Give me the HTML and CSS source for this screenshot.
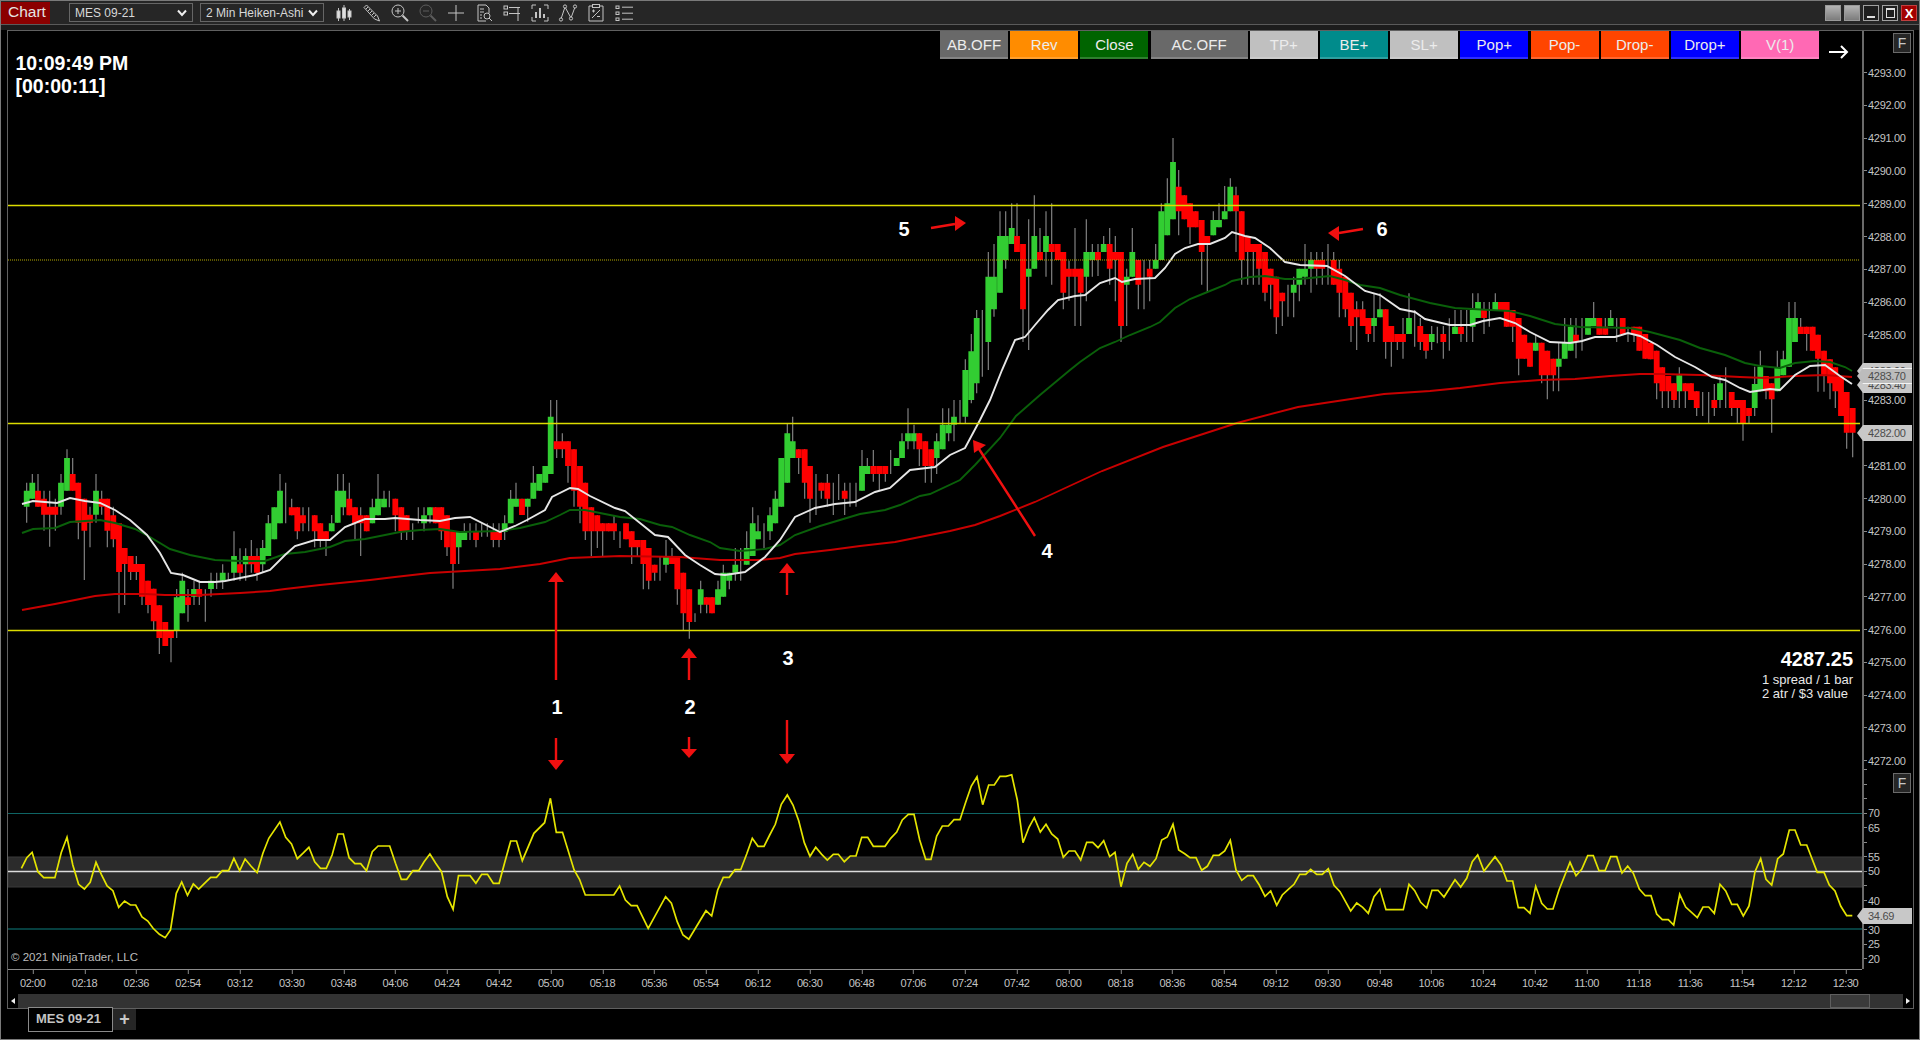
FILE: index.html
```html
<!DOCTYPE html>
<html lang="en">
<head>
    <meta charset="UTF-8">
    <title>Chart - MES 09-21</title>
    <link rel="stylesheet" href="styles.css">
</head>
<body>
<div class="window">
    <header class="titlebar">
        <div class="chart-tab">Chart</div>
        <div class="combo combo-first">MES 09-21<svg class="chevron" viewBox="0 0 10 8"><path d="M1 1.5 5 6 9 1.5"/></svg></div>
        <div class="combo">2 Min Heiken-Ashi<svg class="chevron" viewBox="0 0 10 8"><path d="M1 1.5 5 6 9 1.5"/></svg></div>
        <div class="tools">
            <!-- candles -->
            <svg class="tool" viewBox="0 0 20 20"><path d="M4.5 5v13M10 2v16M15.5 6v11"/><rect class="solid" x="3" y="8" width="3" height="7"/><rect class="solid" x="8.5" y="5" width="3" height="10"/><rect class="solid" x="14" y="8" width="3" height="6"/></svg>
            <!-- pencil -->
            <svg class="tool" viewBox="0 0 20 20"><path d="M2 4.5 4.5 2 15.5 13l2 5-5-2z"/><path d="M4 6 6 4M6 8l2-2M8 10l2-2M10 12l2-2M12 14l2-2"/></svg>
            <!-- zoom in -->
            <svg class="tool" viewBox="0 0 20 20"><circle cx="8" cy="8" r="6"/><path d="M8 5v6M5 8h6"/><path class="thick" d="m12.5 12.5 5.5 5.5"/></svg>
            <!-- zoom out -->
            <svg class="tool tool-off" viewBox="0 0 20 20"><circle cx="8" cy="8" r="6"/><path d="M5 8h6"/><path class="thick" d="m12.5 12.5 5.5 5.5"/></svg>
            <!-- crosshair -->
            <svg class="tool" viewBox="0 0 20 20"><path d="M10 2v16M2 10h16"/></svg>
            <!-- document search -->
            <svg class="tool" viewBox="0 0 20 20"><path d="M12 18H4V2h8l3 3v5"/><path d="M6 6h4M6 9h4M6 12h2M6 15h2"/><circle cx="13" cy="13" r="3"/><path d="m15 15 3 3"/></svg>
            <!-- properties -->
            <svg class="tool" viewBox="0 0 20 20"><rect x="2" y="3" width="3.5" height="3"/><rect x="2" y="9" width="3.5" height="3"/><path d="M7 4.5h11M7 10.5h11M16 4.5V18"/></svg>
            <!-- bars in brackets -->
            <svg class="tool" viewBox="0 0 20 20"><path d="M6 2H2v4M14 2h4v4M6 18H2v-4M14 18h4v-4"/><path class="thick" d="M6 15V9M10 15V5M14 15v-4"/></svg>
            <!-- drawing nodes -->
            <svg class="tool" viewBox="0 0 20 20"><path d="m3 16 4-12 6 11 4-11"/><circle class="solid-dark" cx="3" cy="16.5" r="1.6"/><circle class="solid-dark" cx="7" cy="3.5" r="1.6"/><circle class="solid-dark" cx="13" cy="15.5" r="1.6"/><circle class="solid-dark" cx="17" cy="3.5" r="1.6"/></svg>
            <!-- clipboard -->
            <svg class="tool" viewBox="0 0 20 20"><path d="M6 3H3v15h14V3h-3"/><rect x="6.5" y="1.5" width="7" height="3"/><path d="M6 15 14 7M6 8h3M7.5 6.5v3M11 13.5h3"/></svg>
            <!-- list -->
            <svg class="tool" viewBox="0 0 20 20"><rect x="2" y="3" width="3" height="2.5"/><rect x="2" y="9" width="3" height="2.5"/><rect x="2" y="15" width="3" height="2.5"/><path d="M8 4.2h11M8 10.2h11M8 16.2h11"/></svg>
        </div>
        <div class="window-buttons">
            <div class="win-btn win-grey"></div>
            <div class="win-btn win-grey"></div>
            <div class="win-btn win-dark"><span class="win-min"></span></div>
            <div class="win-btn win-dark"><span class="win-max"></span></div>
            <div class="win-btn win-close">X</div>
        </div>
    </header>
    <div class="strip"></div>

    <main class="frame">
        <div class="panels">
            <div class="plot">
                <svg class="canvas" width="1854" height="938" viewBox="8 31 1854 938">
                    <!-- rsi panel -->
                    <rect class="rsi-band" x="8" y="857" width="1854" height="30"/>
                    <path class="rsi-limit" d="M8 813.5h1854"/>
                    <path class="rsi-limit rsi-limit-low" d="M8 929h1854"/>
                    <path class="rsi-mid" d="M8 871.5h1854"/>
                    <polyline id="rsi-line" class="rsi-line" points=""/>

                    <!-- candles, filled from chart.js -->
                    <path id="wicks" class="wicks" d=""/>
                    <path id="bodies-green" class="body-green" d=""/>
                    <path id="bodies-red" class="body-red" d=""/>

                    <!-- moving averages -->
                    <polyline class="ema ema-slow" points="22,610 55,604 75,600 95,596 115,594 145,594 165,595 200,595 240,593 270,591 285,589 320,585 340,583 370,580 395,577 430,573 465,571 500,569 540,564 560,560 570,558 620,556 680,557 720,560 760,560 780,558 795,554 830,550 860,546 895,542 920,537 950,531 975,525 1000,516 1035,502 1102,471 1163,447 1237,423 1298,407 1384,394 1430,391 1460,388 1500,383 1540,380 1575,379 1610,376 1640,374 1660,374 1700,375 1740,377 1765,378 1795,376 1825,375 1852,377"/>
                    <polyline class="ema ema-mid" points="22,533 33,529 55,528 70,522 85,521 100,520 115,523 135,529 150,537 170,549 190,555 215,560 240,561 265,561 285,554 305,552 330,547 345,541 365,539 390,534 400,532 420,530 440,529 460,532 500,531 520,528 545,522 560,515 570,510 585,510 610,515 620,517 640,519 660,525 672,527 690,535 710,542 720,548 740,551 765,549 780,545 795,535 820,526 840,520 860,514 885,510 900,505 920,496 930,494 960,480 975,465 1000,438 1016,416 1040,395 1070,370 1080,362 1100,348 1115,342 1130,335 1150,327 1160,322 1175,308 1190,299 1205,293 1225,285 1232,281 1250,277 1265,276 1285,279 1300,279 1330,276 1345,280 1360,285 1380,288 1400,295 1430,303 1455,308 1490,310 1510,311 1530,316 1555,324 1580,327 1630,328 1650,332 1680,340 1700,348 1725,355 1745,363 1760,366 1780,368 1795,363 1815,361 1830,362 1845,367 1852,371"/>
                    <polyline class="ema ema-fast" points="22,504 33,501 45,502 57,503 70,498 85,501 100,503 115,510 130,520 147,535 160,553 171,573 183,575 200,582 215,582 225,581 240,578 255,575 270,570 285,555 295,546 315,540 330,540 345,527 365,519 385,519 395,518 420,520 440,521 455,518 470,517 500,532 515,526 527,520 545,510 552,497 570,488 578,489 590,496 615,508 625,511 640,523 655,535 668,537 685,555 700,565 715,574 725,575 745,572 765,557 780,540 795,517 815,508 835,504 855,502 875,492 890,488 910,470 935,467 950,455 965,448 980,420 990,400 1002,370 1015,340 1025,337 1035,325 1048,310 1058,300 1075,296 1085,295 1100,283 1115,278 1122,282 1135,279 1155,278 1165,268 1175,254 1185,248 1198,244 1210,244 1225,238 1232,232 1245,236 1255,238 1270,248 1285,262 1300,265 1327,266 1345,276 1365,291 1380,295 1400,309 1415,312 1425,319 1450,325 1470,325 1483,321 1500,318 1515,323 1530,332 1550,342 1570,343 1582,341 1595,337 1615,337 1628,333 1640,336 1657,345 1675,357 1695,367 1712,377 1725,380 1740,388 1750,392 1770,389 1780,390 1795,375 1810,366 1825,365 1840,376 1852,384"/>

                    <!-- horizontal levels -->
                    <path class="level" d="M8 205.6h1852M8 423.6h1852M8 630.6h1852"/>
                    <path class="level level-dotted" d="M8 260h1852"/>

                    <!-- annotation arrows -->
                    <path class="arrow-line" d="M556 582v98M689 658v22M787 573v22M979 449l56 87M955 224l-24 4M1339 233l24-4M556 738v22M689 737v12M787 720v34"/>
                    <g class="arrow-head">
                        <polygon points="556,572 548,582 564,582"/>
                        <polygon points="689,648 681,658 697,658"/>
                        <polygon points="787,563 779,573 795,573"/>
                        <polygon points="973,440 986,445 974,453"/>
                        <polygon points="966,223 955,216 955,231"/>
                        <polygon points="1328,233 1339,226 1339,241"/>
                        <polygon points="556,770 548,760 564,760"/>
                        <polygon points="689,758 681,749 697,749"/>
                        <polygon points="787,764 779,754 795,754"/>
                    </g>
                    <g class="arrow-label">
                        <text x="557" y="714">1</text>
                        <text x="690" y="714">2</text>
                        <text x="788" y="665">3</text>
                        <text x="1047" y="558">4</text>
                        <text x="904" y="236">5</text>
                        <text x="1382" y="236">6</text>
                    </g>
                </svg>

                <div class="clock">10:09:49 PM<br>[00:00:11]</div>

                <div class="order-bar">
                    <div class="order-btn btn-grey">AB.OFF</div>
                    <div class="order-btn btn-orange">Rev</div>
                    <div class="order-btn btn-green">Close</div>
                    <div class="order-btn btn-grey btn-wide">AC.OFF</div>
                    <div class="order-btn btn-silver">TP+</div>
                    <div class="order-btn btn-teal">BE+</div>
                    <div class="order-btn btn-silver">SL+</div>
                    <div class="order-btn btn-blue">Pop+</div>
                    <div class="order-btn btn-red">Pop-</div>
                    <div class="order-btn btn-red">Drop-</div>
                    <div class="order-btn btn-blue">Drop+</div>
                    <div class="order-btn btn-pink btn-last">V(1)</div>
                    <svg class="next-arrow" viewBox="0 0 20 14"><path d="M0 7h18M12 1l6 6-6 6"/></svg>
                </div>

                <div class="quote">
                    <div class="quote-price">4287.25</div>
                    <div>1 spread / 1 bar</div>
                    <div class="quote-atr">2 atr / $3 value</div>
                </div>

                <div class="copyright">© 2021 NinjaTrader, LLC</div>
            </div>

            <aside class="axis">
                <div class="price-scale">
                    <div class="tick">4293.00</div>
                    <div class="tick">4292.00</div>
                    <div class="tick">4291.00</div>
                    <div class="tick">4290.00</div>
                    <div class="tick">4289.00</div>
                    <div class="tick">4288.00</div>
                    <div class="tick">4287.00</div>
                    <div class="tick">4286.00</div>
                    <div class="tick">4285.00</div>
                    <div class="tick">4284.00</div>
                    <div class="tick">4283.00</div>
                    <div class="tick">4282.00</div>
                    <div class="tick">4281.00</div>
                    <div class="tick">4280.00</div>
                    <div class="tick">4279.00</div>
                    <div class="tick">4278.00</div>
                    <div class="tick">4277.00</div>
                    <div class="tick">4276.00</div>
                    <div class="tick">4275.00</div>
                    <div class="tick">4274.00</div>
                    <div class="tick">4273.00</div>
                    <div class="tick">4272.00</div>
                </div>
                <div class="rsi-scale">
                    <div class="tick"></div>
                    <div class="tick"></div>
                    <div class="tick"></div>
                    <div class="tick">70</div>
                    <div class="tick">65</div>
                    <div class="tick"></div>
                    <div class="tick">55</div>
                    <div class="tick">50</div>
                    <div class="tick"></div>
                    <div class="tick">40</div>
                    <div class="tick"></div>
                    <div class="tick">30</div>
                    <div class="tick">25</div>
                    <div class="tick">20</div>
                </div>
                <div class="f-btn f-btn-top">F</div>
                <div class="f-btn f-btn-rsi">F</div>
                <div class="pill pill-a">4283.90</div>
                <div class="pill pill-c">4283.40</div>
                <div class="pill pill-b">4283.70</div>
                <div class="pill pill-last">4282.00</div>
                <div class="pill pill-rsi">34.69</div>
            </aside>
        </div>

        <div class="time-row">
            <div class="time-axis">
                <span>02:00</span><span>02:18</span><span>02:36</span><span>02:54</span><span>03:12</span><span>03:30</span>
                <span>03:48</span><span>04:06</span><span>04:24</span><span>04:42</span><span>05:00</span><span>05:18</span>
                <span>05:36</span><span>05:54</span><span>06:12</span><span>06:30</span><span>06:48</span><span>07:06</span>
                <span>07:24</span><span>07:42</span><span>08:00</span><span>08:18</span><span>08:36</span><span>08:54</span>
                <span>09:12</span><span>09:30</span><span>09:48</span><span>10:06</span><span>10:24</span><span>10:42</span>
                <span>11:00</span><span>11:18</span><span>11:36</span><span>11:54</span><span>12:12</span><span>12:30</span>
            </div>
        </div>

        <div class="scrollbar">
            <div class="scroll-arrow"><span class="tri-left"></span></div>
            <div class="scroll-thumb"></div>
            <div class="scroll-arrow"><span class="tri-right"></span></div>
        </div>
    </main>

    <footer class="tabs">
        <div class="tab">MES 09-21</div>
        <div class="tab-add">+</div>
    </footer>
</div>
<script src="chart.js"></script>
</body>
</html>
```

FILE: styles.css
```css
* {
    box-sizing: border-box;
}

body {
    margin: 0;
    background-color: #000;
    font-family: "Liberation Sans", Arial, sans-serif;
    overflow: hidden;
}

.window {
    display: flex;
    flex-direction: column;
    width: 1920px;
    height: 1040px;
    border: 1px solid #7a7a7a;
    background-color: #000;
}

/* Title bar */
.titlebar {
    display: flex;
    align-items: flex-start;
    height: 24px;
    flex: none;
    background-color: #262626;
    border-bottom: 1px solid #5a5a5a;
}

.chart-tab {
    width: 49px;
    height: 22px;
    margin-top: 1px;
    background-color: #8b0000;
    color: #e4e4e4;
    font-size: 15.5px;
    line-height: 20px;
    padding-left: 7px;
}

.combo {
    display: flex;
    align-items: center;
    justify-content: space-between;
    width: 124px;
    height: 19px;
    margin: 2px 0 0 7px;
    padding: 0 5px 0 5px;
    border: 1px solid #666;
    color: #d8d8d8;
    font-size: 12px;
}

.combo-first {
    margin-left: 19px;
}

.chevron {
    width: 10px;
    height: 8px;
    fill: none;
    stroke: #eee;
    stroke-width: 2;
}

.tools {
    display: flex;
    gap: 8px;
    margin: 2px 0 0 10px;
}

.tool {
    width: 20px;
    height: 20px;
    fill: none;
    stroke: #c4c4c4;
    stroke-width: 1;
}

.tool .solid {
    fill: #e0e0e0;
}

.tool .solid-dark {
    fill: #262626;
}

.tool .thick {
    stroke-width: 2;
}

.tool-off {
    stroke: #5c5c5c;
}

.window-buttons {
    display: flex;
    gap: 3px;
    margin: 4px 2px 0 auto;
}

.win-btn {
    display: flex;
    align-items: center;
    justify-content: center;
    width: 16px;
    height: 16px;
    border: 1px solid #8c8c8c;
}

.win-grey {
    background: linear-gradient(#b4b4b4, #7c7c7c);
    border-color: #9a9a9a;
}

.win-dark {
    background-color: #1e1e1e;
    border-color: #a0a0a0;
}

.win-min {
    width: 8px;
    height: 2px;
    margin-top: 8px;
    background-color: #ddd;
}

.win-max {
    width: 9px;
    height: 10px;
    border: 1px solid #ddd;
    border-top-width: 2px;
}

.win-close {
    background-color: #a30000;
    border-color: #c04040;
    color: #fff;
    font-size: 13px;
    font-weight: bold;
}

.strip {
    height: 5px;
    flex: none;
    background-color: #1c1c1c;
}

/* Chart frame */
.frame {
    display: flex;
    flex-direction: column;
    height: 979px;
    flex: none;
    margin: 0 5px 0 6px;
    border: 1px solid #606060;
}

.panels {
    display: flex;
    height: 938px;
    flex: none;
}

.plot {
    position: relative;
    width: 1854px;
    flex: none;
    background-color: #000;
}

.canvas {
    display: block;
}

.rsi-band {
    fill: #2b2b2b;
    stroke: #3a3a3a;
}

.rsi-limit {
    fill: none;
    stroke: #0e6464;
    stroke-width: 1;
}

.rsi-limit-low {
    stroke: #063f3f;
    stroke-width: 2;
}

.rsi-mid {
    fill: none;
    stroke: #dcdcdc;
    stroke-width: 1.6;
}

.rsi-line {
    fill: none;
    stroke: #e4e400;
    stroke-width: 1.7;
}

.wicks {
    fill: none;
    stroke: #8c8c8c;
    stroke-width: 1.1;
}

.body-green {
    fill: #32cd32;
}

.body-red {
    fill: #ff0000;
}

.ema {
    fill: none;
    stroke-width: 1.9;
}

.ema-fast {
    stroke: #e6e6e6;
}

.ema-mid {
    stroke: #0a600a;
}

.ema-slow {
    stroke: #c80000;
}

.level {
    fill: none;
    stroke: #dcdc00;
    stroke-width: 1.5;
}

.level-dotted {
    stroke: #b4a800;
    stroke-width: 1;
    stroke-dasharray: 1 1;
}

.arrow-line {
    fill: none;
    stroke: #f01010;
    stroke-width: 2.4;
}

.arrow-head {
    fill: #f01010;
}

.arrow-label {
    fill: #fff;
    font-size: 20px;
    font-weight: bold;
    text-anchor: middle;
}

/* Things lying over the plot */
.clock {
    position: absolute;
    left: 7.5px;
    top: 21px;
    color: #fff;
    font-size: 19.5px;
    font-weight: bold;
    line-height: 23px;
}

.order-bar {
    position: absolute;
    top: 0;
    left: 932px;
    display: flex;
    align-items: flex-start;
    gap: 2.2px;
}

.order-btn {
    width: 68px;
    height: 28px;
    border-bottom: 2px solid rgba(255, 255, 255, 0.18);
    color: #ececec;
    font-size: 15px;
    line-height: 28px;
    text-align: center;
}

.btn-wide {
    width: 97px;
}

.btn-last {
    width: 78px;
}

.btn-grey { background-color: #696969; }
.btn-orange { background-color: #ff8c00; }
.btn-green { background-color: #006400; }
.btn-silver { background-color: #c0c0c0; }
.btn-teal { background-color: #008b8b; }
.btn-blue { background-color: #0000ff; }
.btn-red { background-color: #ff4500; }
.btn-pink { background-color: #ff69b4; }

.next-arrow {
    width: 20px;
    height: 14px;
    margin: 14px 0 0 8px;
    fill: none;
    stroke: #fff;
    stroke-width: 2;
}

.quote {
    position: absolute;
    top: 617px;
    right: 9px;
    color: #e8e8e8;
    font-size: 13px;
    line-height: 14px;
    text-align: right;
}

.quote-price {
    margin-bottom: 3px;
    color: #fff;
    font-size: 20px;
    font-weight: bold;
    line-height: 22px;
}

.quote-atr {
    margin-right: 5px;
}

.copyright {
    position: absolute;
    left: 3px;
    top: 920px;
    color: #bdbdbd;
    font-size: 11.5px;
}

/* Price axis */
.axis {
    position: relative;
    width: 51px;
    flex: none;
    border-left: 2px solid #6a6a6a;
    color: #c4c4c4;
    font-size: 11px;
    letter-spacing: -0.3px;
}

.price-scale {
    padding-top: 25.3px;
}

.rsi-scale {
    margin-top: -14.7px;
}

.price-scale .tick {
    height: 32.78px;
}

.rsi-scale .tick {
    height: 14.54px;
}

.tick {
    display: flex;
    align-items: center;
    gap: 1px;
}

.tick::before {
    content: "";
    width: 3px;
    height: 1px;
    background-color: #8a8a8a;
}

.f-btn {
    position: absolute;
    left: 29px;
    width: 18px;
    height: 20px;
    background-color: #262626;
    border: 1px solid #6a6a6a;
    color: #c8c8c8;
    font-size: 14px;
    line-height: 18px;
    text-align: center;
}

.f-btn-top { top: 2px; }
.f-btn-rsi { top: 742px; }

.pill {
    position: absolute;
    left: -7px;
    width: 55px;
    height: 16px;
    padding-left: 11px;
    background-color: #c8c8c8;
    color: #4c4c4c;
    line-height: 16px;
    clip-path: polygon(6px 0, 100% 0, 100% 100%, 6px 100%, 0 50%);
}

.pill-a { top: 332px; }
.pill-c { top: 346px; }

.pill-b {
    top: 337px;
    background-color: #bcbcbc;
    border-top: 1px solid #f4f4f4;
    border-bottom: 1px solid #f4f4f4;
    line-height: 14px;
}

.pill-last { top: 394px; }
.pill-rsi { top: 877px; }

/* Time axis */
.time-row {
    height: 25px;
    flex: none;
}

.time-axis {
    display: flex;
    width: 1854px;
    height: 25px;
    padding-left: 0;
    border-top: 1px solid #8a8a8a;
    color: #c4c4c4;
    font-size: 11px;
    letter-spacing: -0.4px;
}

.time-axis span {
    position: relative;
    width: 51.8px;
    flex: none;
    margin-left: 0;
    padding-top: 7px;
    text-align: center;
    transform: translateX(-1.2px);
}

.time-axis span::before {
    content: "";
    position: absolute;
    top: 0;
    left: 50%;
    width: 1px;
    height: 4px;
    background-color: #8a8a8a;
}

/* Scrollbar */
.scrollbar {
    display: flex;
    align-items: stretch;
    height: 14px;
    flex: none;
    background-color: #333;
}

.scroll-arrow {
    display: flex;
    align-items: center;
    justify-content: center;
    width: 10px;
    background-color: #000;
}

.tri-left {
    border: 3px solid transparent;
    border-right: 4px solid #eee;
    border-left: 0;
}

.tri-right {
    border: 3px solid transparent;
    border-left: 4px solid #eee;
    border-right: 0;
}

.scroll-thumb {
    width: 40px;
    margin: 0 33px 0 auto;
    background-color: #3a3a3a;
    border: 1px solid #5e5e5e;
}

/* Tabs */
.tabs {
    display: flex;
    align-items: flex-start;
    flex: 1;
    padding-left: 27px;
}

.tab {
    position: relative;
    width: 85px;
    height: 25px;
    margin-top: -2px;
    padding-left: 7px;
    background-color: #000;
    border: 1px solid #8a8a8a;
    color: #c4c4c4;
    font-size: 13px;
    font-weight: bold;
    line-height: 22px;
}

.tab-add {
    width: 23px;
    height: 21px;
    background-color: #262626;
    color: #c8c8c8;
    font-size: 18px;
    font-weight: bold;
    line-height: 20px;
    text-align: center;
}
```

FILE: chart.js
```js
// Bars and RSI were read off the chart at a zoom, so each block keeps its own
// origin and scale. Bar: [x, bodyTop, bodyBottom, high, low, kind]
// kind: g = up, r = down, d = doji (wick only)
const barBlocks = [
    { ox: 0, oy: 430, bars: [
        [80,182,230,158,278,'g'],[97,158,206,132,206,'g'],[114,182,230,132,230,'r'],[132,206,254,182,302,'r'],
        [149,230,254,182,350,'r'],[166,230,254,206,302,'r'],[183,158,230,132,254,'g'],[201,84,182,58,182,'g'],
        [218,132,182,84,182,'r'],[235,158,278,158,328,'r'],[253,206,302,206,450,'r'],[270,254,278,230,352,'r'],
        [288,182,254,132,278,'g'],[305,206,230,182,254,'r'],[322,206,302,206,352,'r'],[340,256,328,230,352,'r'],
        [357,280,426,280,550,'r'],[374,354,402,354,525,'r'],[392,378,426,378,450,'r'],[409,402,426,378,450,'r'],
        [426,402,500,402,525,'r'],[444,452,525,452,550,'r'],[461,476,574,476,600,'r'],[478,526,624,526,672,'r'],
        [496,576,648,576,648,'r'],[513,600,624,600,697,'r'],[530,502,600,477,624,'g'],[547,452,550,428,550,'g'],
        [564,502,525,477,575,'r'],[582,477,500,452,525,'g'],[598,477,500,452,525,'r'],[616,0,0,478,575,'d'],
        [633,452,477,428,500,'g'],[650,0,0,428,477,'d'],[668,428,452,403,477,'g'],[685,0,0,428,452,'d'],
        [702,378,428,304,452,'g'],[720,403,428,355,452,'r'],[737,378,403,355,452,'g'],[754,378,403,330,428,'r'],
        [771,378,428,355,452,'r'],[788,354,403,330,428,'g'],[805,280,378,255,378,'g'],[823,232,328,232,328,'g'],
        [840,182,280,132,280,'g'],[857,0,0,158,280,'d'],[875,232,256,206,256,'r'],[892,232,304,232,328,'r'],
        [909,256,280,232,304,'r'],[926,0,0,232,304,'d'],[944,256,304,256,352,'r'],[961,280,328,280,352,'r'],
        [978,304,328,304,378,'r'],[995,280,304,255,304,'g'],[1013,182,278,132,278,'g'],[1030,182,232,132,256,'g'],
        [1048,206,256,158,256,'r'],[1065,232,280,232,330,'r'],[1082,256,280,232,378,'r'],[1100,256,304,256,304,'r'],
        [1117,232,280,206,280,'g'],[1134,206,256,132,256,'g'],[1152,206,232,182,232,'g'],[1168,0,0,182,232,'d'],
        [1186,206,256,206,304,'r'],[1204,232,304,232,330,'r'],[1220,256,304,256,330,'r'],[1238,0,0,280,330,'d'],
        [1255,0,0,232,280,'d'],[1272,256,280,232,304,'g'],[1290,232,256,232,280,'g'],[1307,232,280,232,280,'r'],
        [1324,232,304,232,330,'r'],[1341,256,352,256,378,'r'],[1359,304,402,304,476,'r'],[1376,304,352,304,402,'g'],
        [1393,304,330,280,330,'g'],[1410,0,0,280,330,'d'],[1428,304,330,280,352,'r'],[1445,0,0,280,320,'d'],
        [1462,0,0,280,320,'d'],[1480,304,330,280,352,'r'],[1497,304,330,280,352,'r']
    ]},
    { ox: 500, oy: 400, bars: [
        [14,370,395,346,420,'g'],[32,296,370,270,370,'g'],[48,296,320,248,320,'g'],[66,296,345,296,345,'r'],
        [83,296,320,296,365,'g'],[100,248,296,198,296,'g'],[118,222,272,222,272,'g'],[136,198,248,198,248,'g'],
        [152,50,222,0,222,'g'],[170,124,148,0,174,'r'],[187,124,148,100,174,'r'],[204,124,198,124,248,'r'],
        [222,148,272,148,320,'r'],[240,198,320,198,370,'r'],[256,248,394,248,420,'r'],[274,322,394,322,468,'r'],
        [292,346,394,346,444,'r'],[308,370,394,370,468,'r'],[326,370,394,370,394,'r'],[342,370,394,345,420,'r'],
        [360,0,0,394,444,'d'],[378,370,418,370,418,'r'],[395,394,442,394,492,'r'],[412,420,442,420,468,'r'],
        [430,420,492,420,568,'r'],[446,444,542,444,568,'r'],[464,494,518,494,542,'r'],[480,0,0,468,542,'d'],
        [498,470,494,420,518,'g'],[516,470,492,444,492,'r'],[532,470,568,470,614,'r'],[550,518,640,518,690,'r'],
        [568,568,666,568,716,'r'],[585,0,0,640,666,'d'],[602,568,614,542,640,'g'],[620,592,614,592,640,'r'],
        [636,592,640,592,640,'r'],[654,568,614,542,614,'g'],[670,518,590,494,590,'g'],[688,518,542,518,568,'g'],
        [706,494,518,444,542,'g'],[722,0,0,444,542,'d'],[740,444,494,394,494,'g'],[758,370,468,322,468,'g'],
        [774,394,418,346,418,'g'],[792,0,0,370,444,'d'],[810,346,394,322,420,'g'],[826,296,370,272,370,'g'],
        [844,174,320,174,320,'g'],[862,100,248,70,248,'g'],[878,124,174,50,174,'g'],[896,148,174,148,222,'r'],
        [914,148,248,148,296,'r'],[930,198,296,198,368,'r'],[948,0,0,222,345,'d'],[964,248,272,248,296,'r'],
        [982,248,296,222,320,'r'],[1000,0,0,248,345,'d'],[1016,0,0,222,300,'d'],[1034,272,296,248,345,'r'],
        [1050,0,0,248,320,'d'],[1068,0,0,248,320,'d'],[1086,198,272,150,272,'g'],[1102,198,222,174,222,'g'],
        [1120,198,222,150,245,'r'],[1138,198,222,198,270,'r'],[1156,198,222,198,245,'r'],[1172,0,0,150,222,'d'],
        [1190,174,198,174,198,'g'],[1206,124,174,100,174,'g'],[1224,100,124,25,148,'g'],[1242,100,124,74,148,'g'],
        [1258,100,148,100,198,'r'],[1276,124,198,124,248,'r'],[1294,148,198,148,248,'r'],[1310,124,174,100,222,'g'],
        [1328,74,148,25,148,'g'],[1346,74,100,25,124,'g'],[1362,50,74,0,124,'g'],[1380,0,0,0,70,'d']
    ]},
    { ox: 950, oy: 130, bars: [
        [46,720,860,688,880,'g'],[64,664,810,612,820,'g'],[80,564,760,540,790,'g'],[97,0,0,540,740,'d'],
        [115,440,636,366,720,'g'],[132,440,538,342,560,'g'],[150,318,488,244,488,'g'],[167,318,390,244,416,'g'],
        [185,294,342,220,342,'g'],[201,318,366,220,366,'r'],[219,342,538,342,636,'r'],[236,416,440,268,660,'g'],
        [253,318,416,196,416,'g'],[270,366,390,294,390,'r'],[288,318,366,244,440,'g'],[305,342,366,220,464,'r'],
        [323,342,390,342,390,'r'],[340,366,488,366,538,'r'],[357,416,440,392,512,'r'],[375,416,440,294,588,'r'],
        [392,416,488,416,588,'r'],[409,366,440,268,514,'g'],[427,366,390,342,440,'g'],[444,366,390,342,438,'r'],
        [461,342,366,318,366,'g'],[479,342,416,294,464,'r'],[496,366,390,318,514,'r'],[513,366,588,366,636,'r'],
        [530,440,464,416,588,'g'],[547,366,440,294,440,'g'],[565,390,464,390,538,'r'],[582,0,0,390,538,'d'],
        [599,416,440,390,514,'r'],[617,390,416,342,416,'g'],[634,244,390,220,390,'g'],[652,220,316,145,316,'g'],
        [669,96,268,24,268,'g'],[686,170,244,120,316,'r'],[703,196,268,196,268,'r'],[720,220,292,220,342,'r'],
        [737,244,292,244,292,'r'],[755,270,366,270,464,'r'],[772,318,342,318,488,'r'],[790,270,316,244,316,'g'],
        [807,270,292,220,292,'g'],[824,244,268,168,268,'g'],[841,170,244,145,244,'g'],[858,196,244,170,366,'r'],
        [875,244,390,244,464,'r'],[893,318,366,318,464,'r'],[910,342,366,342,464,'r'],[927,342,416,342,464,'r'],
        [945,366,488,366,514,'r'],[962,416,464,416,538,'r'],[979,440,562,440,612,'r'],[997,488,514,488,588,'r'],
        [1014,0,0,464,560,'d'],[1031,464,488,440,562,'g'],[1048,416,464,416,514,'g'],[1065,416,440,342,464,'g'],
        [1083,390,416,366,488,'g'],[1100,390,416,366,464,'r'],[1117,390,416,366,464,'r'],[1134,0,0,342,464,'d'],
        [1151,390,464,366,464,'r'],[1168,416,488,390,562,'r'],[1186,440,538,440,562,'r'],[1203,488,588,488,636,'r'],
        [1220,538,562,514,660,'r'],[1238,538,588,514,588,'r'],[1255,564,612,564,636,'r'],[1272,564,588,490,636,'g'],
        [1290,538,562,490,562,'g'],[1307,538,636,538,686,'r'],[1324,588,636,588,710,'r'],[1342,612,636,612,660,'r'],
        [1359,612,636,564,686,'r'],[1377,564,612,490,612,'g'],[1394,0,0,540,650,'d'],[1411,588,636,564,660,'r'],
        [1428,612,662,612,686,'r'],[1445,612,636,588,660,'g'],[1462,0,0,590,640,'d'],[1480,612,636,588,686,'r']
    ]},
    { ox: 1400, oy: 280, bars: [
        [148,0,0,115,212,'d'],[165,140,162,90,162,'g'],[183,140,162,90,186,'r'],[200,0,0,90,186,'d'],
        [218,90,140,40,186,'g'],[234,66,114,40,114,'g'],[252,90,114,66,162,'r'],[268,0,0,66,140,'d'],
        [286,66,90,40,90,'g'],[303,66,90,66,90,'r'],[320,66,140,66,140,'r'],[338,90,140,90,186,'r'],
        [356,114,236,114,286,'r'],[373,164,236,164,236,'r'],[390,188,260,188,260,'r'],[407,188,212,164,212,'g'],
        [425,188,286,188,310,'r'],[442,212,286,212,358,'r'],[460,236,286,236,334,'r'],[476,236,260,188,334,'g'],
        [494,188,236,114,236,'g'],[512,140,212,114,212,'g'],[528,164,186,114,235,'r'],[546,0,0,114,212,'d'],
        [564,114,164,114,164,'g'],[581,114,138,66,138,'g'],[598,114,164,114,164,'r'],[616,140,164,114,164,'r'],
        [632,114,138,90,138,'g'],[650,0,0,114,186,'d'],[668,114,162,114,162,'r'],[684,0,0,140,186,'d'],
        [702,140,162,140,186,'r'],[718,140,212,140,212,'r'],[736,162,236,162,236,'r'],[752,188,238,188,238,'r'],
        [770,212,310,212,358,'r'],[787,262,334,262,384,'r'],[805,288,334,288,384,'r'],[822,310,360,310,384,'r'],
        [838,286,334,262,384,'g'],[856,310,334,310,384,'r'],[873,310,360,310,360,'r'],[890,334,384,334,408,'r'],
        [908,0,0,336,408,'d'],[926,0,0,336,430,'d'],[943,360,384,312,408,'r'],[960,310,360,290,384,'g'],
        [977,0,0,262,384,'d'],[995,336,384,336,408,'r'],[1012,360,384,360,430,'r'],[1029,360,430,360,482,'r'],
        [1047,384,408,384,430,'r'],[1064,312,384,260,408,'g'],[1081,260,334,212,334,'g'],[1098,288,334,288,358,'r'],
        [1115,310,358,310,458,'r'],[1132,262,334,212,334,'g'],[1150,238,286,212,286,'g'],[1167,114,260,66,260,'g'],
        [1185,114,186,66,186,'g'],[1202,140,162,114,162,'r'],[1220,140,162,140,212,'r'],[1238,140,212,140,212,'r'],
        [1254,164,236,164,335,'r'],[1272,212,284,212,335,'r'],[1290,238,310,238,358,'r'],[1306,262,334,262,384,'r'],
        [1323,288,408,288,408,'r'],[1340,336,458,336,506,'r'],[1358,384,458,384,532,'r']
    ]}
];

// RSI trace, block by block
const rsiBlocks = [
    { ox: 0, oy: 780, sx: 2.24, points: [
        [48,265],[60,233],[72,217],[85,275],[98,293],[123,293],[137,218],[150,172],[163,255],[176,313],[189,327],[202,307],
        [215,247],[227,283],[240,318],[253,332],[266,382],[279,363],[292,375],[304,375],[318,411],[331,423],[343,445],[357,463],
        [370,473],[382,450],[395,340],[407,306],[420,346],[433,312],[445,327],[458,310],[472,292],[485,292],[498,272],[512,272],
        [524,235],[537,272],[549,237],[562,258],[576,278],[589,220],[602,175],[627,126],[640,172],[653,192],[666,236],[680,218],
        [692,202],[705,245],[718,265],[731,265],[744,225],[757,162],[769,162],[782,233],[795,251],[808,251],[821,272],[834,215],
        [847,198],[873,198],[886,250],[899,298],[911,298],[925,272],[938,272],[950,245],[963,222],[976,250],[989,275],[1002,350],
        [1015,388],[1027,287],[1053,287],[1066,310],[1079,283],[1092,283],[1105,310],[1118,310],[1131,245],[1144,183],[1157,183],
        [1170,242],[1196,160],[1220,128],[1233,55],[1246,157],[1260,157],[1286,270],[1298,298],[1311,345],[1375,345],[1388,318],
        [1401,360],[1414,377],[1427,377],[1452,445],[1491,350],[1504,370],[1517,425],[1530,465],[1543,478]
    ]},
    { ox: 700, oy: 770, sx: 3, points: [
        [18,422],[35,438],[53,360],[70,322],[88,322],[105,299],[122,299],[140,252],[157,205],[174,229],[192,229],[209,195],
        [226,163],[244,103],[262,75],[279,105],[296,152],[313,218],[330,259],[347,232],[365,253],[382,270],[400,253],[415,253],
        [433,275],[451,258],[468,258],[485,202],[503,202],[520,229],[555,229],[572,205],[590,186],[607,150],[625,133],[642,133],
        [659,210],[677,268],[693,268],[710,198],[727,168],[745,168],[762,149],[780,149],[797,97],[814,48],[831,20],[848,104],
        [866,45],[883,45],[900,19],[918,19],[935,14],[952,90],[969,218],[987,172],[1003,143],[1021,186],[1038,163],[1055,192],
        [1073,207],[1090,262],[1107,243],[1125,243],[1142,270],[1160,217],[1178,217],[1194,233],[1211,212],[1229,260],[1245,247],
        [1263,350],[1281,280],[1298,253],[1315,298],[1332,277],[1350,289],[1368,266],[1385,210],[1402,201],[1419,163],[1436,240],
        [1454,251],[1470,263],[1488,263],[1505,301],[1522,289],[1540,256],[1557,256]
    ]},
    { ox: 1220, oy: 640, sx: 3, points: [
        [14,633],[31,601],[48,690],[65,721],[83,707],[100,707],[118,735],[135,769],[152,753],[170,796],[187,765],[205,748],
        [222,733],[239,703],[257,703],[272,688],[290,703],[307,703],[325,686],[342,736],[360,755],[392,813],[410,789],[428,802],
        [445,820],[462,770],[480,748],[498,809],[550,809],[567,733],[584,752],[602,787],[620,804],[636,751],[654,751],[672,771],
        [705,719],[722,741],[740,715],[757,665],[773,645],[792,693],[825,650],[843,675],[861,723],[878,723],[895,803],[912,803],
        [930,820],[947,739],[965,790],[982,807],[999,807],[1017,750],[1050,667],[1068,707],[1085,688],[1103,647],[1120,647],
        [1137,692],[1155,692],[1172,650],[1190,650],[1206,699],[1223,678],[1240,700],[1258,747],[1276,767],[1293,767],[1310,822],
        [1327,839],[1345,839],[1361,855],[1379,763],[1397,801],[1432,833],[1449,801],[1466,801],[1483,820],[1500,733],[1517,753],
        [1535,793],[1552,793]
    ]},
    { ox: 1700, oy: 750, sx: 3, points: [
        [130,498],[147,468],[165,365],[182,326],[198,388],[215,405],[233,326],[250,312],[268,240],[285,240],[302,285],[320,285],
        [352,367],[372,367],[388,405],[405,423],[422,468],[440,497],[457,497]
    ]}
];

const BODY_WIDTH = 5.8;

function drawBars() {
    let wicks = '';
    let green = '';
    let red = '';

    barBlocks.forEach(block => {
        block.bars.forEach(([x, top, bottom, high, low, kind]) => {
            const cx = block.ox + x / 3;
            const toY = v => (block.oy + v / 3).toFixed(1);

            wicks += `M${cx.toFixed(1)} ${toY(high)}V${toY(low)}`;
            if (kind === 'd') return;

            const rect = `M${(cx - BODY_WIDTH / 2).toFixed(1)} ${toY(top)}h${BODY_WIDTH}V${toY(bottom)}h-${BODY_WIDTH}z`;
            if (kind === 'g') green += rect;
            else red += rect;
        });
    });

    document.getElementById('wicks').setAttribute('d', wicks);
    document.getElementById('bodies-green').setAttribute('d', green);
    document.getElementById('bodies-red').setAttribute('d', red);
}

function drawRsi() {
    const points = [];
    rsiBlocks.forEach(block => {
        block.points.forEach(([x, y]) => {
            points.push(`${(block.ox + x / block.sx).toFixed(1)},${(block.oy + y / 3).toFixed(1)}`);
        });
    });
    document.getElementById('rsi-line').setAttribute('points', points.join(' '));
}

drawBars();
drawRsi();
```
